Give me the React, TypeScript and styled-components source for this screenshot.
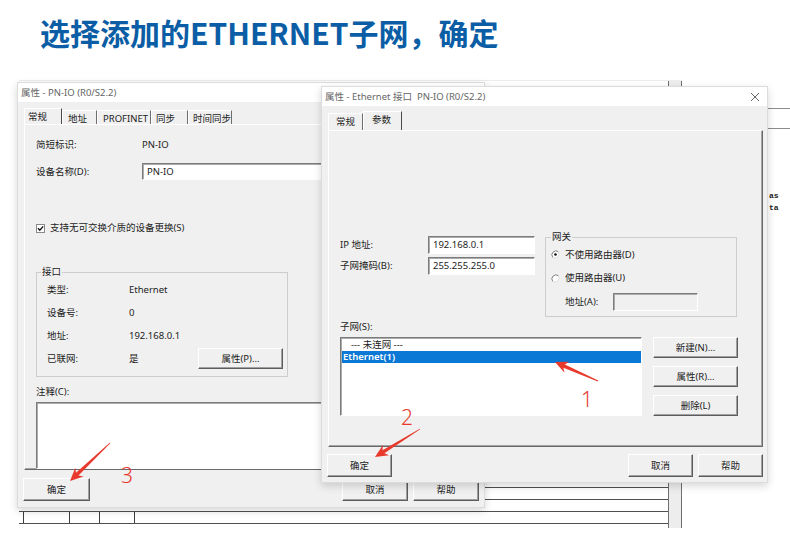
import React from "react";
import styled, { createGlobalStyle } from "styled-components";

const UI_FONT = `"Noto Sans", "Noto Sans CJK SC", sans-serif`;

const GlobalStyle = createGlobalStyle`
  html, body {
    margin: 0;
    padding: 0;
    background: #fff;
  }
  body {
    font-family: ${UI_FONT};
  }
  * {
    box-sizing: border-box;
  }
`;

type Pt = [number, number];

// tapered annotation arrow, tail -> tip
const arrowPoints = (tail: Pt, tip: Pt) => {
  const dx = tip[0] - tail[0];
  const dy = tip[1] - tail[1];
  const len = Math.hypot(dx, dy);
  const ux = dx / len;
  const uy = dy / len;
  const nx = -uy;
  const ny = ux;
  const head = 13;
  const wing = 6;
  const at = (d: number, n: number): string =>
    `${(tip[0] - ux * d + nx * n).toFixed(1)},${(tip[1] - uy * d + ny * n).toFixed(1)}`;
  return [
    at(len, 0.4),
    at(head - 3, 1.8),
    at(head, wing),
    at(0, 0),
    at(head, -wing),
    at(head - 3, -1.8),
    at(len, -0.4),
  ].join(" ");
};

const RadioIcon = ({ checked }: { checked?: boolean }) => (
  <svg width="9" height="9" viewBox="0 0 9 9">
    <circle cx="4.5" cy="4.5" r="4" fill="#fff" />
    <path d="M1.7 7.3 A4 4 0 0 1 7.3 1.7" fill="none" stroke="#7a7a7a" strokeWidth="1" />
    <path d="M7.3 1.7 A4 4 0 0 1 1.7 7.3" fill="none" stroke="#d8d8d8" strokeWidth="1" />
    {checked && <circle cx="4.5" cy="4.5" r="1.3" fill="#111" />}
  </svg>
);

const CheckIcon = () => (
  <svg width="9" height="9" viewBox="0 0 9 9">
    <rect x="0.5" y="0.5" width="8" height="8" fill="#fff" stroke="#8a8a8a" />
    <path d="M2 4.3 L3.8 6.2 L7.2 2.4" fill="none" stroke="#111" strokeWidth="1.4" />
  </svg>
);

const CloseIcon = () => (
  <svg width="10" height="10" viewBox="0 0 10 10">
    <path d="M1 1 L9 9 M9 1 L1 9" stroke="#555" strokeWidth="0.9" />
  </svg>
);

const App = () => {
  return (
    <Page>
      <GlobalStyle />
      <Heading>选择添加的ETHERNET子网，确定</Heading>
      <Desktop>
        <BackApp>
          <BackMain>
            <BackRow />
            <BackRow />
            <BackRow />
            <BackRow>
              <BackCell $w={5} />
              <BackCell $w={46} />
              <BackCell $w={30} />
              <BackCell $w={35} />
            </BackRow>
          </BackMain>
          <BackScroll />
        </BackApp>
        <SidePane>
          <SideRule $gap={0} />
          <SideRule $gap={19} />
          <SideText $gap={61}>as</SideText>
          <SideText $gap={0}>ta</SideText>
        </SidePane>

        {/* 属性 - PN-IO */}
        <Window $left={17} $top={2} $w={468} $h={426}>
          <TitleBar>
            <span>属性 - PN-IO (R0/S2.2)</span>
          </TitleBar>
          <WinBody $pad="6px 5px 6px 6px">
            <TabStrip $h={16}>
              <Tab $w={38} $pad={3} $active>常规</Tab>
              <Tab $w={35} $pad={5}>地址</Tab>
              <Tab $w={54} $pad={5}>PROFINET</Tab>
              <Tab $w={37} $pad={4}>同步</Tab>
              <Tab $w={44} $pad={4}>时间同步</Tab>
            </TabStrip>
            <TabPanel $pad="11px 8px 0 11px">
              <InfoRow $h={18}>
                <Label $w={106}>简短标识:</Label>
                <span>PN-IO</span>
              </InfoRow>
              <InfoRow $h={17} $gap={9}>
                <Label $w={106}>设备名称(D):</Label>
                <Field $h={17}>PN-IO</Field>
              </InfoRow>
              <InfoRow $h={16} $gap={40}>
                <CheckIcon />
                <CheckText>支持无可交换介质的设备更换(S)</CheckText>
              </InfoRow>
              <Group $w={252} $h={111} $gap={30} $pad="0 4px 0 10px">
                <GroupLegend $shift={-6}>接口</GroupLegend>
                <InfoRow $h={23}>
                  <Label $w={82}>类型:</Label>
                  <span>Ethernet</span>
                </InfoRow>
                <InfoRow $h={23}>
                  <Label $w={82}>设备号:</Label>
                  <span>0</span>
                </InfoRow>
                <InfoRow $h={23}>
                  <Label $w={82}>地址:</Label>
                  <span>192.168.0.1</span>
                </InfoRow>
                <InfoRow $h={23}>
                  <Label $w={82}>已联网:</Label>
                  <span>是</span>
                  <Btn $w={85} $h={21} $push>属性(P)...</Btn>
                </InfoRow>
              </Group>
              <InfoRow $h={14} $gap={8}>注释(C):</InfoRow>
              <Field $h={55} $gap={3} />
            </TabPanel>
            <ButtonBar $gap={8}>
              <Btn $w={67} $h={23}>确定</Btn>
              <Btn $w={66} $h={23} $push>取消</Btn>
              <Btn $w={66} $h={23}>帮助</Btn>
            </ButtonBar>
          </WinBody>
        </Window>

        {/* 属性 - Ethernet 接口 */}
        <Window $left={321} $top={6} $w={447} $h={397}>
          <TitleBar>
            <span>属性 - Ethernet 接口&nbsp; PN-IO (R0/S2.2)</span>
            <CloseIcon />
          </TitleBar>
          <WinBody $pad="5px 4px 5px 6px">
            <TabStrip $h={19}>
              <Tab $w={35} $pad={7}>常规</Tab>
              <Tab $w={39} $pad={8} $active>参数</Tab>
            </TabStrip>
            <TabPanel $pad="100px 0 0 11px">
              <TopRow>
                <FieldCol>
                  <InfoRow $h={18}>
                    <Label $w={88}>IP 地址:</Label>
                    <Field $w={107} $h={18}>192.168.0.1</Field>
                  </InfoRow>
                  <InfoRow $h={18} $gap={3}>
                    <Label $w={88}>子网掩码(B):</Label>
                    <Field $w={107} $h={18}>255.255.255.0</Field>
                  </InfoRow>
                </FieldCol>
                <Group $w={192} $h={86} $gap={0} $pad="0 4px 2px 5px">
                  <GroupLegend $shift={0}>网关</GroupLegend>
                  <InfoRow $h={23}>
                    <RadioIcon checked />
                    <RadioText>不使用路由器(D)</RadioText>
                  </InfoRow>
                  <InfoRow $h={24}>
                    <RadioIcon />
                    <RadioText>使用路由器(U)</RadioText>
                  </InfoRow>
                  <InfoRow $h={24} $indent={14}>
                    <Label $w={48}>地址(A):</Label>
                    <Field $w={85} $h={18} $disabled />
                  </InfoRow>
                </Group>
              </TopRow>
              <InfoRow $h={13} $gap={3}>子网(S):</InfoRow>
              <ListRow>
                <ListBox>
                  <ListItem $indent={9}>--- 未连网 ---</ListItem>
                  <ListItem $indent={1} $selected>Ethernet(1)</ListItem>
                </ListBox>
                <SideButtons>
                  <Btn $w={85} $h={21}>新建(N)...</Btn>
                  <Btn $w={85} $h={21}>属性(R)...</Btn>
                  <Btn $w={85} $h={21}>删除(L)</Btn>
                </SideButtons>
              </ListRow>
            </TabPanel>
            <ButtonBar $gap={7}>
              <Btn $w={65} $h={23}>确定</Btn>
              <Btn $w={65} $h={23} $push>取消</Btn>
              <Btn $w={65} $h={23}>帮助</Btn>
            </ButtonBar>
          </WinBody>
        </Window>
      </Desktop>

      <Annotations width="790" height="543" viewBox="0 0 790 543">
        <polygon points={arrowPoints([598, 381], [555, 362])} />
        <polygon points={arrowPoints([420, 429], [375, 457])} />
        <polygon points={arrowPoints([110, 443], [70, 481])} />
        <text x="581" y="407">1</text>
        <text x="401" y="425">2</text>
        <text x="121" y="483">3</text>
      </Annotations>
    </Page>
  );
};

export default App;

const Page = styled.div`
  position: relative;
  width: 790px;
  height: 543px;
  overflow: hidden;
  background: #fff;
`;

const Heading = styled.h1`
  margin: 0;
  height: 80px;
  padding: 14px 0 0 40px;
  font: 700 30px/36px "Noto Sans CJK SC", sans-serif;
  color: #0b5ea5;
  white-space: nowrap;
`;

const Desktop = styled.div`
  position: relative;
  height: 463px;
  font: 9.5px/12px ${UI_FONT};
  color: #1c1c1c;
`;

const BackApp = styled.div`
  position: absolute;
  left: 19px;
  top: 0;
  width: 663px;
  height: 448px;
  display: flex;
  border-top: 1px solid #ececec;
`;

const BackMain = styled.div`
  flex: 1;
  display: flex;
  flex-direction: column;
  justify-content: flex-end;
  padding-bottom: 4px;
`;

const BackRow = styled.div`
  height: 12px;
  display: flex;
  border-bottom: 1px solid #4f4f4f;
`;

const BackCell = styled.div<{ $w: number }>`
  flex: none;
  width: ${(p) => p.$w}px;
  border-right: 1px solid #3c3c3c;
`;

const BackScroll = styled.div`
  width: 14px;
  background: #ededed;
  border-left: 1px solid #6f6f6f;
  border-right: 1px solid #6f6f6f;
`;

const SidePane = styled.div`
  position: absolute;
  left: 682px;
  top: 0;
  width: 108px;
  height: 448px;
  padding-top: 28px;
`;

const SideRule = styled.div<{ $gap: number }>`
  margin-top: ${(p) => p.$gap}px;
  border-top: 1px solid #8c8c8c;
`;

const SideText = styled.div<{ $gap: number }>`
  margin-top: ${(p) => p.$gap}px;
  padding-left: 87px;
  font: 700 8px/12px "Liberation Mono", monospace;
  color: #222;
`;

const Window = styled.div<{ $left: number; $top: number; $w: number; $h: number }>`
  position: absolute;
  left: ${(p) => p.$left}px;
  top: ${(p) => p.$top}px;
  width: ${(p) => p.$w}px;
  height: ${(p) => p.$h}px;
  display: flex;
  flex-direction: column;
  background: #f0f0f0;
  border: 1px solid #dcdcdc;
  box-shadow: 0 3px 8px rgba(0, 0, 0, 0.16);
`;

const TitleBar = styled.div`
  flex: none;
  height: 19px;
  display: flex;
  align-items: center;
  justify-content: space-between;
  padding: 0 7px 0 3px;
  background: #fff;
  color: #666;
  white-space: nowrap;
`;

const WinBody = styled.div<{ $pad: string }>`
  flex: 1;
  display: flex;
  flex-direction: column;
  min-height: 0;
  padding: ${(p) => p.$pad};
`;

const TabStrip = styled.div<{ $h: number }>`
  flex: none;
  height: ${(p) => p.$h}px;
  display: flex;
  align-items: flex-end;
`;

const Tab = styled.div<{ $w: number; $pad: number; $active?: boolean }>`
  flex: none;
  width: ${(p) => p.$w}px;
  height: ${(p) => (p.$active ? "100%" : "calc(100% - 2px)")};
  padding: 2px 0 0 ${(p) => p.$pad}px;
  border-top: 1px solid #fff;
  border-left: 1px solid #fff;
  border-right: 1px solid ${(p) => (p.$active ? "#4a4a4a" : "#6e6e6e")};
  white-space: nowrap;
`;

const TabPanel = styled.div<{ $pad: string }>`
  flex: 1;
  min-height: 0;
  display: flex;
  flex-direction: column;
  align-items: flex-start;
  padding: ${(p) => p.$pad};
  border-top: 1px solid #fff;
  border-left: 1px solid #fff;
  border-right: 1px solid #696969;
  border-bottom: 1px solid #696969;
  box-shadow: inset -1px -1px 0 #a3a3a3;
`;

const InfoRow = styled.div<{ $h: number; $gap?: number; $indent?: number }>`
  flex: none;
  align-self: stretch;
  display: flex;
  align-items: center;
  height: ${(p) => p.$h}px;
  margin-top: ${(p) => p.$gap ?? 0}px;
  margin-left: ${(p) => p.$indent ?? 0}px;
  white-space: nowrap;
`;

const Label = styled.span<{ $w: number }>`
  flex: none;
  width: ${(p) => p.$w}px;
`;

const CheckText = styled.span`
  margin-left: 5px;
`;

const RadioText = styled.span`
  margin-left: 5px;
`;

const Field = styled.div<{ $w?: number; $h: number; $gap?: number; $disabled?: boolean }>`
  flex: ${(p) => (p.$w ? "none" : "1")};
  align-self: ${(p) => (p.$w ? "auto" : "stretch")};
  width: ${(p) => (p.$w ? `${p.$w}px` : "auto")};
  height: ${(p) => p.$h}px;
  margin-top: ${(p) => p.$gap ?? 0}px;
  padding: 1px 0 0 4px;
  line-height: 14px;
  background: ${(p) => (p.$disabled ? "#f0f0f0" : "#fff")};
  border-top: 1px solid #7c7c7c;
  border-left: 1px solid #7c7c7c;
  border-right: 1px solid #fff;
  border-bottom: 1px solid #fff;
  box-shadow: inset 1px 1px 0 #ababab;
`;

const Group = styled.fieldset<{ $w: number; $h: number; $gap: number; $pad: string }>`
  flex: none;
  width: ${(p) => p.$w}px;
  height: ${(p) => p.$h}px;
  min-width: 0;
  margin: ${(p) => p.$gap}px 0 0 0;
  padding: ${(p) => p.$pad};
  border: 1px solid #cdcdcd;
`;

const GroupLegend = styled.legend<{ $shift: number }>`
  margin-left: ${(p) => p.$shift}px;
  padding: 0 1px;
  line-height: 12px;
`;

const TopRow = styled.div`
  display: flex;
  align-items: flex-start;
`;

const FieldCol = styled.div`
  width: 205px;
  margin-top: 5px;
  display: flex;
  flex-direction: column;
`;

const ListRow = styled.div`
  margin-top: 4px;
  display: flex;
  gap: 11px;
`;

const ListBox = styled.div`
  width: 302px;
  height: 79px;
  padding-top: 1px;
  background: #fff;
  border-top: 1px solid #7c7c7c;
  border-left: 1px solid #7c7c7c;
  border-right: 1px solid #fff;
  border-bottom: 1px solid #fff;
  box-shadow: inset 1px 1px 0 #ababab;
`;

const ListItem = styled.div<{ $indent: number; $selected?: boolean }>`
  height: 12px;
  line-height: 12px;
  padding-left: ${(p) => p.$indent}px;
  margin-left: 1px;
  background: ${(p) => (p.$selected ? "#0a78d4" : "transparent")};
  color: ${(p) => (p.$selected ? "#fff" : "#1c1c1c")};
  font-weight: ${(p) => (p.$selected ? 600 : 400)};
  white-space: nowrap;
`;

const SideButtons = styled.div`
  display: flex;
  flex-direction: column;
  gap: 8px;
`;

const ButtonBar = styled.div<{ $gap: number }>`
  flex: none;
  display: flex;
  gap: 5px;
  margin: ${(p) => p.$gap}px 0 0 -1px;
`;

const Btn = styled.button<{ $w: number; $h: number; $push?: boolean }>`
  flex: none;
  width: ${(p) => p.$w}px;
  height: ${(p) => p.$h}px;
  margin-left: ${(p) => (p.$push ? "auto" : "0")};
  padding: 0;
  display: flex;
  align-items: center;
  justify-content: center;
  font: inherit;
  color: #1c1c1c;
  background: #f0f0f0;
  border-top: 1px solid #fff;
  border-left: 1px solid #fff;
  border-right: 1px solid #5c5c5c;
  border-bottom: 1px solid #5c5c5c;
  box-shadow: inset -1px -1px 0 #a0a0a0;
`;

const Annotations = styled.svg`
  position: absolute;
  left: 0;
  top: 0;
  pointer-events: none;

  polygon {
    fill: #e8392c;
  }

  text {
    fill: #e8392c;
    font: 300 21px "Noto Sans", sans-serif;
  }
`;
